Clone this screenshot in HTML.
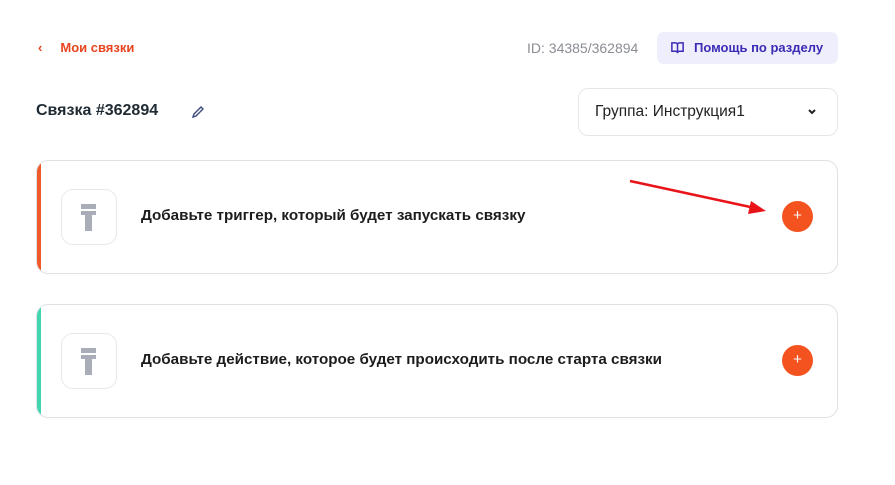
<!DOCTYPE html>
<html><head><meta charset="utf-8"><style>
*{margin:0;padding:0;box-sizing:border-box}
body{width:895px;height:485px;background:#fff;font-family:"Liberation Sans","Noto Sans CJK JP",sans-serif;position:relative;overflow:hidden}
.a{position:absolute}
.back{left:38px;top:40px;color:#e8451e;font-size:13px;font-weight:bold}
.id{left:527px;top:40px;color:#8a8d93;font-size:14px}
.help{left:657px;top:32px;width:181px;height:32px;background:#eeeefc;border-radius:7px;color:#3b2bb5;font-size:13px;font-weight:bold;padding:8px 0 0 37px}
.title{left:36px;top:102px;font-size:16px;font-weight:bold;color:#1f2a33}
.sel{left:578px;top:88px;width:260px;height:48px;border:1px solid #e4e6ea;border-radius:10px;font-size:15.5px;color:#222;padding:14px 0 0 16px}
.card{left:36px;width:802px;height:114px;border:1px solid #dfe1e5;border-radius:12px;overflow:hidden}
.card .bar{position:absolute;left:0;top:0;bottom:0;width:4px}
.ib{position:absolute;left:24px;top:28px;width:56px;height:56px;border:1px solid #e6e8ec;border-radius:12px}
.ib i{position:absolute;background:#a8adb8}
.txt{position:absolute;left:104px;top:46px;font-size:15.2px;font-weight:bold;color:#1c1c1c}
.plus{position:absolute;left:745px;top:40px;width:31px;height:31px;border-radius:50%;background:#f4521f;color:#fff;font-size:15px;text-align:center;line-height:30px}
</style></head><body>
<div class="a back">‹&nbsp;&nbsp;&nbsp;&nbsp;&nbsp;Мои связки</div>
<div class="a id">ID: 34385/362894</div>
<div class="a help"><svg class="a" style="left:13px;top:8px" width="15" height="15" viewBox="0 0 16 16" fill="none" stroke="#3b2bb5" stroke-width="1.6"><path d="M2 3h4a2 2 0 0 1 2 2v9a2 2 0 0 0-2-2H2zM14 3h-4a2 2 0 0 0-2 2v9a2 2 0 0 1 2-2h4z"/></svg>Помощь по разделу</div>
<div class="a title">Связка #362894</div>
<svg class="a" style="left:190px;top:104px" width="16" height="16" viewBox="0 0 16 16" fill="none" stroke="#3b4a7a" stroke-width="1.4"><path d="M3 13l1-3 7-7 2 2-7 7z"/></svg>
<div class="a sel">Группа: Инструкция1<svg class="a" style="left:228px;top:19px" width="10" height="8" viewBox="0 0 10 8" fill="none" stroke="#222" stroke-width="2"><path d="M2 2l3 3 3-3"/></svg></div>
<div class="a card" style="top:160px"><div class="bar" style="background:#f0592a"></div><div class="ib"><i style="left:19px;top:14px;width:15px;height:5px"></i><i style="left:23px;top:21px;width:7px;height:20px"></i><i style="left:19px;top:21px;width:15px;height:4px"></i></div><div class="txt">Добавьте триггер, который будет запускать связку</div><div class="plus">+</div></div>
<div class="a card" style="top:304px"><div class="bar" style="background:#3fd6b0"></div><div class="ib"><i style="left:19px;top:14px;width:15px;height:5px"></i><i style="left:23px;top:21px;width:7px;height:20px"></i><i style="left:19px;top:21px;width:15px;height:4px"></i></div><div class="txt">Добавьте действие, которое будет происходить после старта связки</div><div class="plus">+</div></div>
<svg class="a" style="left:0;top:0" width="895" height="485"><line x1="630" y1="181" x2="755" y2="208" stroke="#e8141a" stroke-width="2.5"/><polygon points="766,211 751,201 748,214" fill="#e8141a"/></svg>
</body></html>
